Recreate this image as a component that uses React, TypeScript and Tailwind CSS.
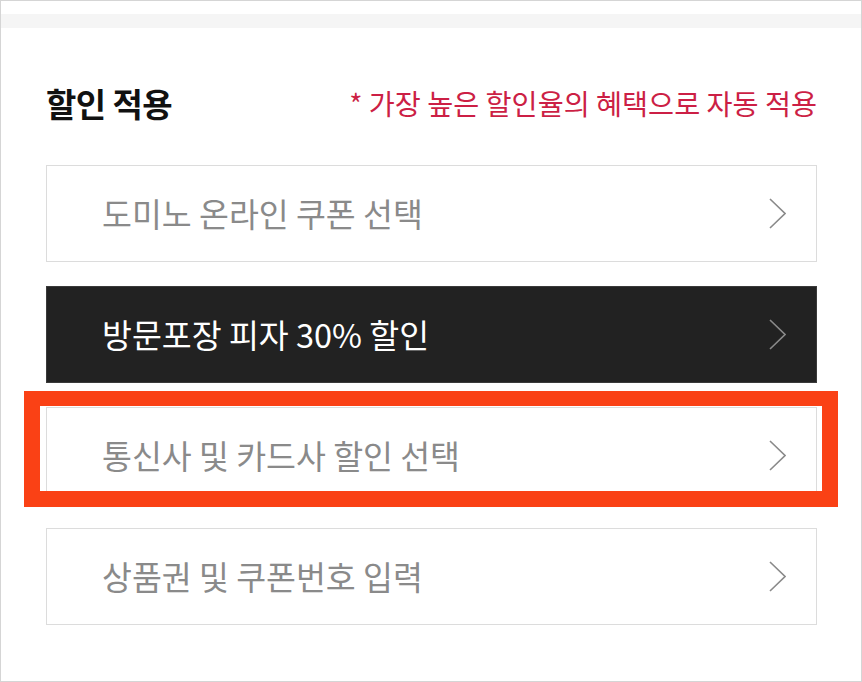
import { ReactNode } from "react";

function Chevron() {
  return (
    <svg width="17" height="31" viewBox="0 0 17 31" fill="none">
      <polyline points="1,1 16,15.5 1,30" stroke="#8a8a8a" strokeWidth="1.6" />
    </svg>
  );
}

function OptionRow({ label, dark, children }: { label: string; dark?: boolean; children?: ReactNode }) {
  return (
    <div
      className={
        "relative h-[97px] flex items-center justify-between pl-[55px] pr-[30px] border " +
        (dark ? "bg-[#222222] border-[#3a3a3a]" : "bg-white border-[#dcdcdc]")
      }
    >
      <span className={"text-[32.5px] leading-none " + (dark ? "text-white" : "text-[#8a8a8a]")}>{label}</span>
      <Chevron />
      {children}
    </div>
  );
}

export default function App() {
  return (
    <div
      className="w-[862px] h-[682px] border border-[#d5d5d5] bg-white overflow-hidden"
      style={{ fontFamily: '"Noto Sans CJK KR", "Noto Sans", sans-serif' }}
    >
      <div className="h-[13px]" />
      <div className="h-[14px] bg-[#f5f5f5]" />

      <div className="pl-[45px] pr-[44px]">
        {/* header */}
        <div className="mt-[57px] h-[36px] flex items-center justify-between">
          <h2 className="text-[33px] font-bold tracking-[-0.6px] text-[#111] leading-none">할인 적용</h2>
          <p className="text-[28.3px] text-[#cc1f45] leading-none">* 가장 높은 할인율의 혜택으로 자동 적용</p>
        </div>

        {/* options */}
        <div className="mt-[44px] flex flex-col gap-[24px]">
          <OptionRow label="도미노 온라인 쿠폰 선택" />
          <OptionRow label="방문포장 피자 30% 할인" dark />
          <OptionRow label="통신사 및 카드사 할인 선택">
            <div className="absolute -left-[23px] -right-[22px] -top-[17px] -bottom-[4px] border-[16px] border-t-[15px] border-[#fa4115]" />
          </OptionRow>
          <OptionRow label="상품권 및 쿠폰번호 입력" />
        </div>
      </div>
    </div>
  );
}
